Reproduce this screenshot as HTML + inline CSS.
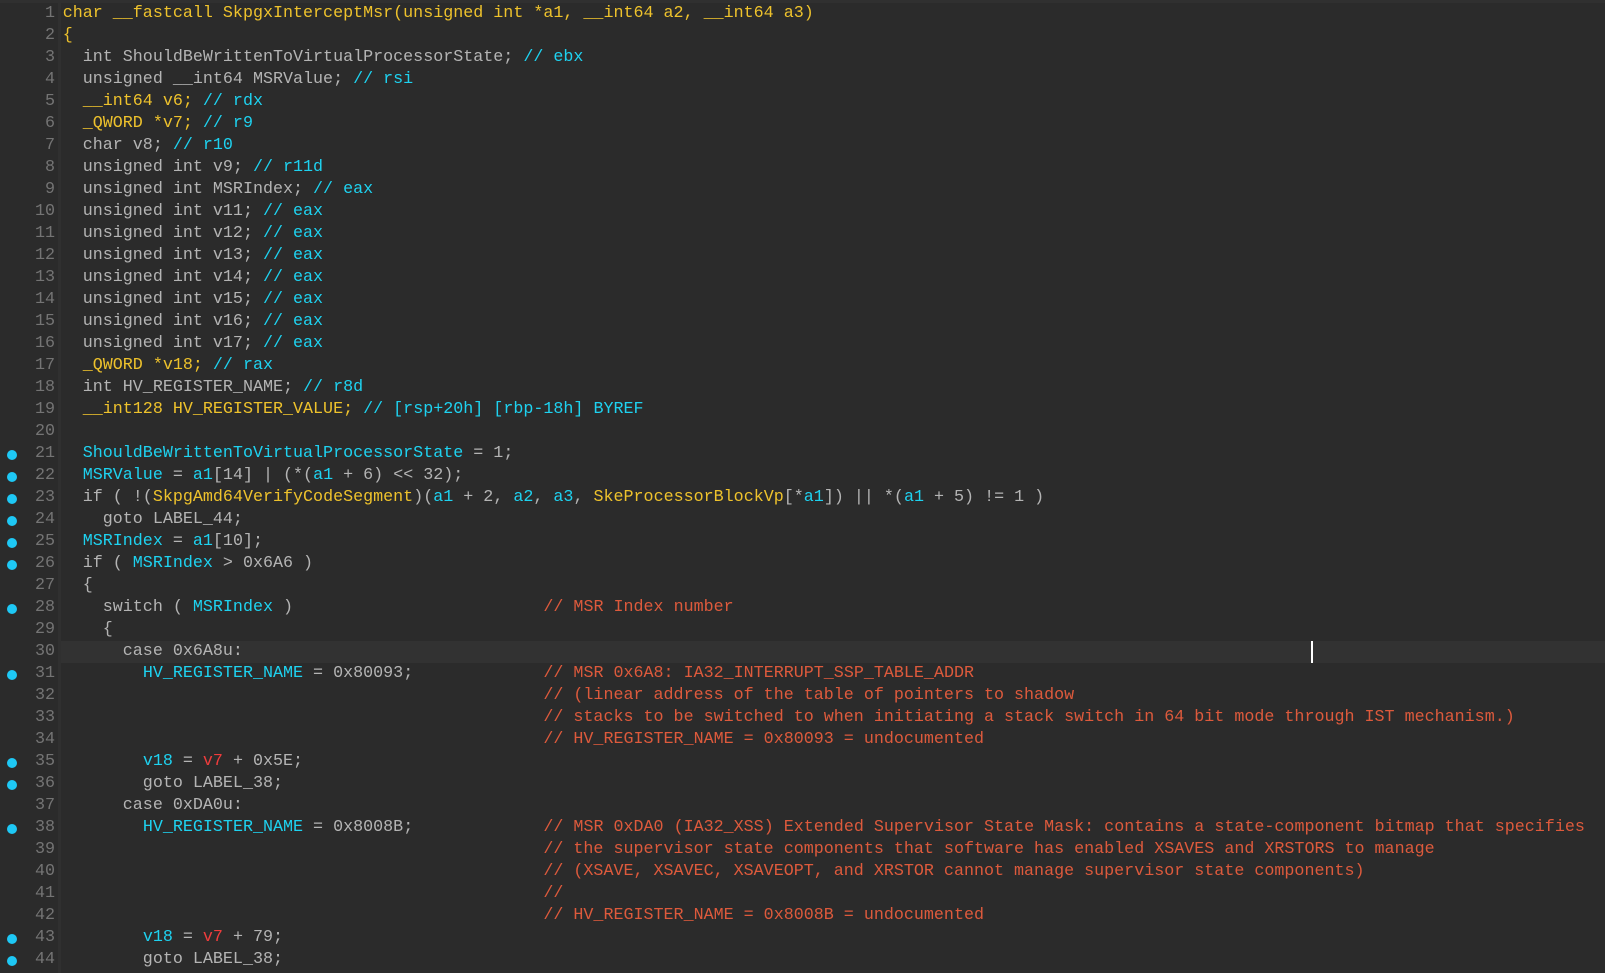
<!DOCTYPE html>
<html><head><meta charset="utf-8"><style>
html,body{margin:0;padding:0}
body{width:1605px;height:973px;background:#2b2b2b;overflow:hidden;position:relative;font-family:"Liberation Mono",monospace;font-size:16.7px;color:#b4b4b4}
.top{position:absolute;left:0;top:0;width:1605px;height:3px;background:#303030}
.sep{position:absolute;left:58px;top:0;width:3px;height:973px;background:#303030}
.hl{position:absolute;left:61px;top:641px;width:1544px;height:22px;background:#323232}
.cur{position:absolute;left:1311px;top:641px;width:2px;height:22px;background:#fff}
.r{position:absolute;left:0;height:22px;line-height:22px;white-space:pre}
.n{position:absolute;left:0;width:55px;text-align:right;color:#747474}
.c{position:absolute;left:62.7px}
.d{position:absolute;left:7px;top:6.5px;width:10px;height:10px;border-radius:50%;background:#1ec8f5}
.y{color:#eec22c}.b{color:#1ed2f0}.m{color:#dd5a3c}.v{color:#f03c3c}
</style></head><body>
<div class="top"></div><div class="sep"></div><div class="hl"></div>
<div class="r" style="top:3px"><span class="n">1</span><span class="c y">char __fastcall SkpgxInterceptMsr(unsigned int *a1, __int64 a2, __int64 a3)</span></div>
<div class="r" style="top:25px"><span class="n">2</span><span class="c y">{</span></div>
<div class="r" style="top:47px"><span class="n">3</span><span class="c">  int ShouldBeWrittenToVirtualProcessorState; <span class="b">// ebx</span></span></div>
<div class="r" style="top:69px"><span class="n">4</span><span class="c">  unsigned __int64 MSRValue; <span class="b">// rsi</span></span></div>
<div class="r" style="top:91px"><span class="n">5</span><span class="c">  <span class="y">__int64 v6;</span> <span class="b">// rdx</span></span></div>
<div class="r" style="top:113px"><span class="n">6</span><span class="c">  <span class="y">_QWORD *v7;</span> <span class="b">// r9</span></span></div>
<div class="r" style="top:135px"><span class="n">7</span><span class="c">  char v8; <span class="b">// r10</span></span></div>
<div class="r" style="top:157px"><span class="n">8</span><span class="c">  unsigned int v9; <span class="b">// r11d</span></span></div>
<div class="r" style="top:179px"><span class="n">9</span><span class="c">  unsigned int MSRIndex; <span class="b">// eax</span></span></div>
<div class="r" style="top:201px"><span class="n">10</span><span class="c">  unsigned int v11; <span class="b">// eax</span></span></div>
<div class="r" style="top:223px"><span class="n">11</span><span class="c">  unsigned int v12; <span class="b">// eax</span></span></div>
<div class="r" style="top:245px"><span class="n">12</span><span class="c">  unsigned int v13; <span class="b">// eax</span></span></div>
<div class="r" style="top:267px"><span class="n">13</span><span class="c">  unsigned int v14; <span class="b">// eax</span></span></div>
<div class="r" style="top:289px"><span class="n">14</span><span class="c">  unsigned int v15; <span class="b">// eax</span></span></div>
<div class="r" style="top:311px"><span class="n">15</span><span class="c">  unsigned int v16; <span class="b">// eax</span></span></div>
<div class="r" style="top:333px"><span class="n">16</span><span class="c">  unsigned int v17; <span class="b">// eax</span></span></div>
<div class="r" style="top:355px"><span class="n">17</span><span class="c">  <span class="y">_QWORD *v18;</span> <span class="b">// rax</span></span></div>
<div class="r" style="top:377px"><span class="n">18</span><span class="c">  int HV_REGISTER_NAME; <span class="b">// r8d</span></span></div>
<div class="r" style="top:399px"><span class="n">19</span><span class="c">  <span class="y">__int128 HV_REGISTER_VALUE;</span> <span class="b">// [rsp+20h] [rbp-18h] BYREF</span></span></div>
<div class="r" style="top:421px"><span class="n">20</span></div>
<div class="r" style="top:443px"><span class="d"></span><span class="n">21</span><span class="c">  <span class="b">ShouldBeWrittenToVirtualProcessorState</span> = 1;</span></div>
<div class="r" style="top:465px"><span class="d"></span><span class="n">22</span><span class="c">  <span class="b">MSRValue</span> = <span class="b">a1</span>[14] | (*(<span class="b">a1</span> + 6) &lt;&lt; 32);</span></div>
<div class="r" style="top:487px"><span class="d"></span><span class="n">23</span><span class="c">  if ( !(<span class="y">SkpgAmd64VerifyCodeSegment</span>)(<span class="b">a1</span> + 2, <span class="b">a2</span>, <span class="b">a3</span>, <span class="y">SkeProcessorBlockVp</span>[*<span class="b">a1</span>]) || *(<span class="b">a1</span> + 5) != 1 )</span></div>
<div class="r" style="top:509px"><span class="d"></span><span class="n">24</span><span class="c">    goto LABEL_44;</span></div>
<div class="r" style="top:531px"><span class="d"></span><span class="n">25</span><span class="c">  <span class="b">MSRIndex</span> = <span class="b">a1</span>[10];</span></div>
<div class="r" style="top:553px"><span class="d"></span><span class="n">26</span><span class="c">  if ( <span class="b">MSRIndex</span> &gt; 0x6A6 )</span></div>
<div class="r" style="top:575px"><span class="n">27</span><span class="c">  {</span></div>
<div class="r" style="top:597px"><span class="d"></span><span class="n">28</span><span class="c">    switch ( <span class="b">MSRIndex</span> )                         <span class="m">// MSR Index number</span></span></div>
<div class="r" style="top:619px"><span class="n">29</span><span class="c">    {</span></div>
<div class="r" style="top:641px"><span class="n">30</span><span class="c">      case 0x6A8u:</span></div>
<div class="r" style="top:663px"><span class="d"></span><span class="n">31</span><span class="c">        <span class="b">HV_REGISTER_NAME</span> = 0x80093;             <span class="m">// MSR 0x6A8: IA32_INTERRUPT_SSP_TABLE_ADDR</span></span></div>
<div class="r" style="top:685px"><span class="n">32</span><span class="c m">                                                // (linear address of the table of pointers to shadow</span></div>
<div class="r" style="top:707px"><span class="n">33</span><span class="c m">                                                // stacks to be switched to when initiating a stack switch in 64 bit mode through IST mechanism.)</span></div>
<div class="r" style="top:729px"><span class="n">34</span><span class="c m">                                                // HV_REGISTER_NAME = 0x80093 = undocumented</span></div>
<div class="r" style="top:751px"><span class="d"></span><span class="n">35</span><span class="c">        <span class="b">v18</span> = <span class="v">v7</span> + 0x5E;</span></div>
<div class="r" style="top:773px"><span class="d"></span><span class="n">36</span><span class="c">        goto LABEL_38;</span></div>
<div class="r" style="top:795px"><span class="n">37</span><span class="c">      case 0xDA0u:</span></div>
<div class="r" style="top:817px"><span class="d"></span><span class="n">38</span><span class="c">        <span class="b">HV_REGISTER_NAME</span> = 0x8008B;             <span class="m">// MSR 0xDA0 (IA32_XSS) Extended Supervisor State Mask: contains a state-component bitmap that specifies</span></span></div>
<div class="r" style="top:839px"><span class="n">39</span><span class="c m">                                                // the supervisor state components that software has enabled XSAVES and XRSTORS to manage</span></div>
<div class="r" style="top:861px"><span class="n">40</span><span class="c m">                                                // (XSAVE, XSAVEC, XSAVEOPT, and XRSTOR cannot manage supervisor state components)</span></div>
<div class="r" style="top:883px"><span class="n">41</span><span class="c m">                                                //</span></div>
<div class="r" style="top:905px"><span class="n">42</span><span class="c m">                                                // HV_REGISTER_NAME = 0x8008B = undocumented</span></div>
<div class="r" style="top:927px"><span class="d"></span><span class="n">43</span><span class="c">        <span class="b">v18</span> = <span class="v">v7</span> + 79;</span></div>
<div class="r" style="top:949px"><span class="d"></span><span class="n">44</span><span class="c">        goto LABEL_38;</span></div>
<div class="cur"></div>
</body></html>
